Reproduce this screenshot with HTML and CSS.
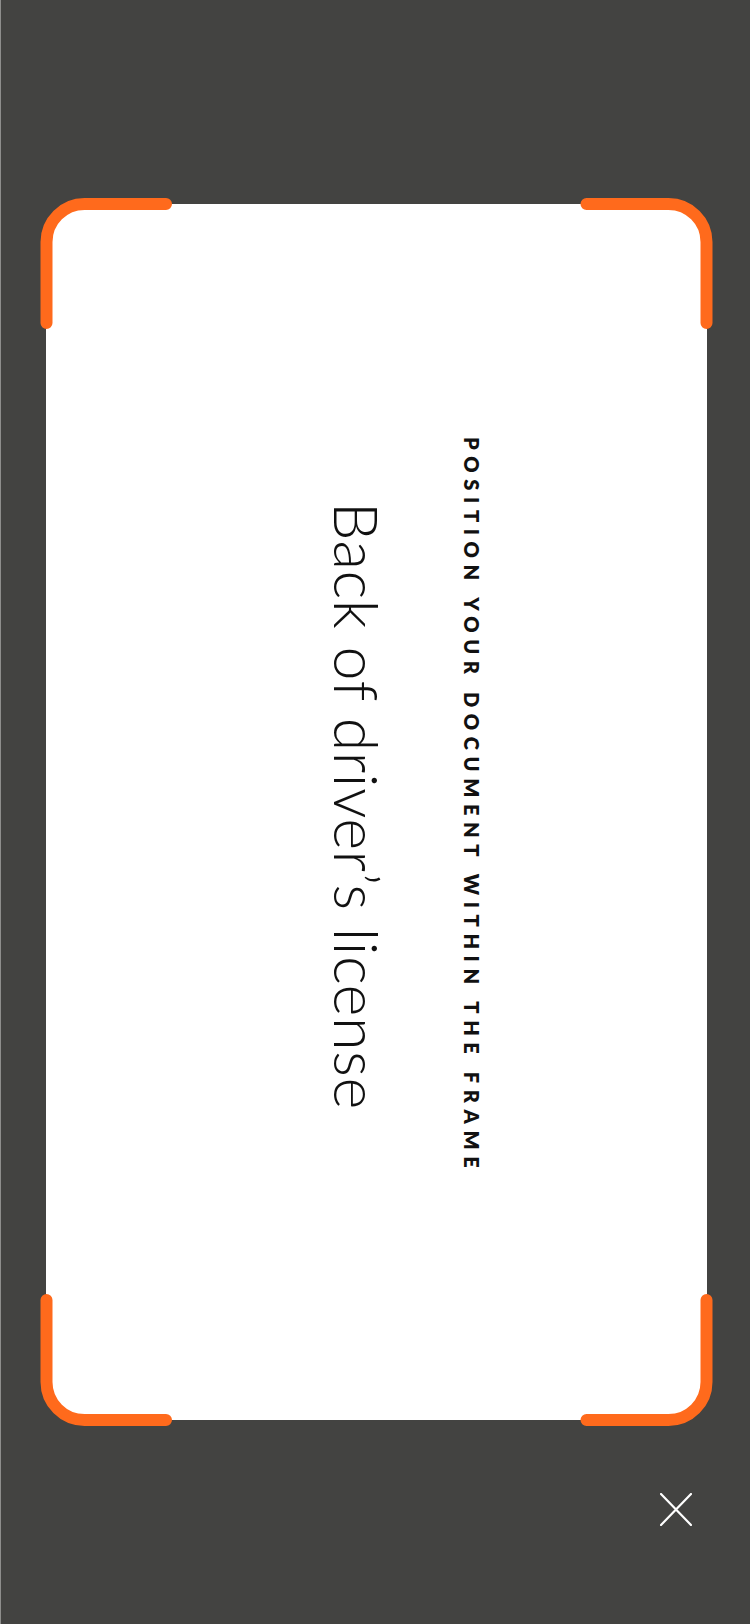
FILE: index.html
```html
<!DOCTYPE html>
<html lang="en">
<head>
<meta charset="utf-8">
<title>Scan document</title>
<link rel="stylesheet" href="styles.css">
</head>
<body>
<div class="screen">
  <div class="card">
    <div class="prompt">
      <div class="hint">Position your document within the frame</div>
      <div class="title">Back of driver’s license</div>
    </div>
  </div>
  <div class="footer">
    <button class="close" aria-label="Close">
      <svg width="32" height="33" viewBox="0 0 32 33"><path d="M1 1 L31 32 M31 1 L1 32" stroke="#fff" stroke-width="2.2" stroke-linecap="round" fill="none"/></svg>
    </button>
  </div>
  <svg class="frame" width="750" height="1624" viewBox="0 0 750 1624">
    <g fill="none" stroke="#ff6a1c" stroke-width="12" stroke-linecap="round">
      <path d="M46.5 323 V242 A38 38 0 0 1 84.5 204 H166"/>
      <path d="M586.5 204 H668.5 A38 38 0 0 1 706.5 242 V323"/>
      <path d="M46.5 1300 V1382 A38 38 0 0 0 84.5 1420 H166"/>
      <path d="M586.5 1420 H668.5 A38 38 0 0 0 706.5 1382 V1300"/>
    </g>
  </svg>
</div>
</body>
</html>
```
FILE: styles.css
```css
html, body {
  margin: 0;
  padding: 0;
}
.screen {
  position: relative;
  width: 750px;
  height: 1624px;
  box-sizing: border-box;
  background: #434341;
  border-left: 1px solid #8e8e8c;
  padding: 204px 43px 0 45px;
  display: flex;
  flex-direction: column;
  overflow: hidden;
}
.card {
  box-sizing: border-box;
  height: 1216px;
  flex: none;
  background: #ffffff;
  border-radius: 40px;
  display: flex;
  align-items: center;
  justify-content: center;
  padding-left: 57px;
  padding-bottom: 12px;
}
.prompt {
  writing-mode: vertical-rl;
  display: flex;
  flex-direction: column;
  align-items: center;
  gap: 77px;
  color: #111;
}
.hint {
  font-family: Lato, "Open Sans", sans-serif;
  font-weight: 800;
  font-size: 20px;
  line-height: 20px;
  letter-spacing: 6.65px;
  text-transform: uppercase;
}
.title {
  font-family: Lato, "Open Sans", sans-serif;
  font-weight: 300;
  font-size: 61px;
  line-height: 56px;
  letter-spacing: 0.5px;
}
.footer {
  flex: 1;
  display: flex;
  justify-content: flex-end;
  padding-top: 73px;
  padding-right: 15px;
}
.close {
  background: none;
  border: 0;
  padding: 0;
  width: 32px;
  height: 33px;
  cursor: pointer;
}
.close svg {
  display: block;
}
.frame {
  position: absolute;
  left: -1px;
  top: 0;
  pointer-events: none;
}
```
